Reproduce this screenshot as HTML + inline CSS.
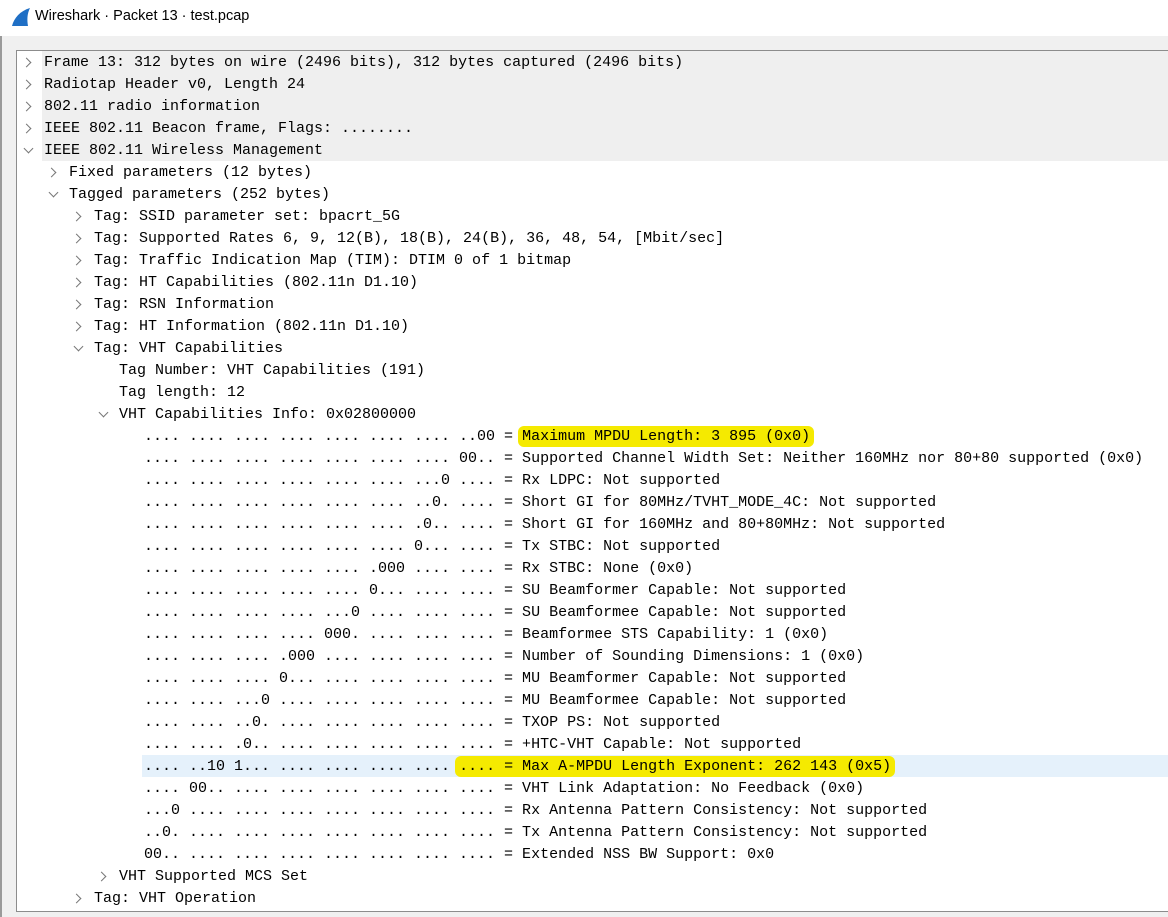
<!DOCTYPE html>
<html><head><meta charset="utf-8"><style>
html,body{margin:0;padding:0;width:1168px;height:917px;overflow:hidden;background:#f0f0f0;font-family:"Liberation Mono",monospace;}
.title{position:absolute;left:0;top:0;width:1168px;height:36px;background:#fff;}
.title span{position:absolute;left:35px;top:8px;font:14.5px "Liberation Sans",sans-serif;color:#000;}
.logo{position:absolute;left:10px;top:7px;}
.lb{position:absolute;left:0;top:36px;width:2px;height:881px;background:#9a9a9a;}
.panel{position:absolute;left:16px;top:50px;width:1160px;height:862px;background:#fff;border:1px solid #8c8c8c;box-sizing:border-box;}
.row{position:absolute;height:22px;line-height:22px;font-size:15px;color:#000;white-space:pre;}
.g{background:#efefef;}
.sel{background:#e5f1fb;}
.arr{position:absolute;width:6px;height:6px;border-right:1.3px solid #777;border-bottom:1.3px solid #777;}
.r{transform:rotate(-45deg);}
.d{transform:rotate(45deg);}
.hl{background:#f5ea00;border-radius:6px;padding:2px 4px;margin:-2px -4px;}
</style></head><body>
<div class="title"><svg class="logo" width="22" height="20" viewBox="0 0 22 20"><path d="M2 19 C4 11 10 4 20 1 C17 7 17 13 18 19 Z" fill="#1f6fc5"/></svg><span>Wireshark · Packet 13 · test.pcap</span></div>
<div class="lb"></div>
<div class="panel"></div>
<div id="rows"></div>
<script>
var L=[
[0,'r','Frame 13: 312 bytes on wire (2496 bits), 312 bytes captured (2496 bits)','g'],
[0,'r','Radiotap Header v0, Length 24','g'],
[0,'r','802.11 radio information','g'],
[0,'r','IEEE 802.11 Beacon frame, Flags: ........','g'],
[0,'d','IEEE 802.11 Wireless Management','g'],
[1,'r','Fixed parameters (12 bytes)'],
[1,'d','Tagged parameters (252 bytes)'],
[2,'r','Tag: SSID parameter set: bpacrt_5G'],
[2,'r','Tag: Supported Rates 6, 9, 12(B), 18(B), 24(B), 36, 48, 54, [Mbit/sec]'],
[2,'r','Tag: Traffic Indication Map (TIM): DTIM 0 of 1 bitmap'],
[2,'r','Tag: HT Capabilities (802.11n D1.10)'],
[2,'r','Tag: RSN Information'],
[2,'r','Tag: HT Information (802.11n D1.10)'],
[2,'d','Tag: VHT Capabilities'],
[3,'','Tag Number: VHT Capabilities (191)'],
[3,'','Tag length: 12'],
[3,'d','VHT Capabilities Info: 0x02800000'],
[4,'','.... .... .... .... .... .... .... ..00 = <span class="hl">Maximum MPDU Length: 3 895 (0x0)</span>'],
[4,'','.... .... .... .... .... .... .... 00.. = Supported Channel Width Set: Neither 160MHz nor 80+80 supported (0x0)'],
[4,'','.... .... .... .... .... .... ...0 .... = Rx LDPC: Not supported'],
[4,'','.... .... .... .... .... .... ..0. .... = Short GI for 80MHz/TVHT_MODE_4C: Not supported'],
[4,'','.... .... .... .... .... .... .0.. .... = Short GI for 160MHz and 80+80MHz: Not supported'],
[4,'','.... .... .... .... .... .... 0... .... = Tx STBC: Not supported'],
[4,'','.... .... .... .... .... .000 .... .... = Rx STBC: None (0x0)'],
[4,'','.... .... .... .... .... 0... .... .... = SU Beamformer Capable: Not supported'],
[4,'','.... .... .... .... ...0 .... .... .... = SU Beamformee Capable: Not supported'],
[4,'','.... .... .... .... 000. .... .... .... = Beamformee STS Capability: 1 (0x0)'],
[4,'','.... .... .... .000 .... .... .... .... = Number of Sounding Dimensions: 1 (0x0)'],
[4,'','.... .... .... 0... .... .... .... .... = MU Beamformer Capable: Not supported'],
[4,'','.... .... ...0 .... .... .... .... .... = MU Beamformee Capable: Not supported'],
[4,'','.... .... ..0. .... .... .... .... .... = TXOP PS: Not supported'],
[4,'','.... .... .0.. .... .... .... .... .... = +HTC-VHT Capable: Not supported'],
[4,'','.... ..10 1... .... .... .... .... <span class="hl">.... = Max A-MPDU Length Exponent: 262 143 (0x5)</span>','sel'],
[4,'','.... 00.. .... .... .... .... .... .... = VHT Link Adaptation: No Feedback (0x0)'],
[4,'','...0 .... .... .... .... .... .... .... = Rx Antenna Pattern Consistency: Not supported'],
[4,'','..0. .... .... .... .... .... .... .... = Tx Antenna Pattern Consistency: Not supported'],
[4,'','00.. .... .... .... .... .... .... .... = Extended NSS BW Support: 0x0'],
[3,'r','VHT Supported MCS Set'],
[2,'r','Tag: VHT Operation']];
var h='';
L.forEach(function(e,i){var y=51+i*22,x=44+e[0]*25;
var cls='row'+(e[3]?' '+e[3]:'');
var left=e[3]?x-2:x;
h+='<div class="'+cls+'" style="top:'+y+'px;left:'+left+'px;right:0;padding-left:'+(x-left)+'px"><div style="position:relative;top:1px">'+e[2]+'</div></div>';
if(e[1]=='r')h+='<div class="arr r" style="left:'+(x-21)+'px;top:'+(y+8)+'px"></div>';
if(e[1]=='d')h+='<div class="arr d" style="left:'+(x-19)+'px;top:'+(y+6)+'px"></div>';
});
document.getElementById('rows').innerHTML=h;
</script>
</body></html>
